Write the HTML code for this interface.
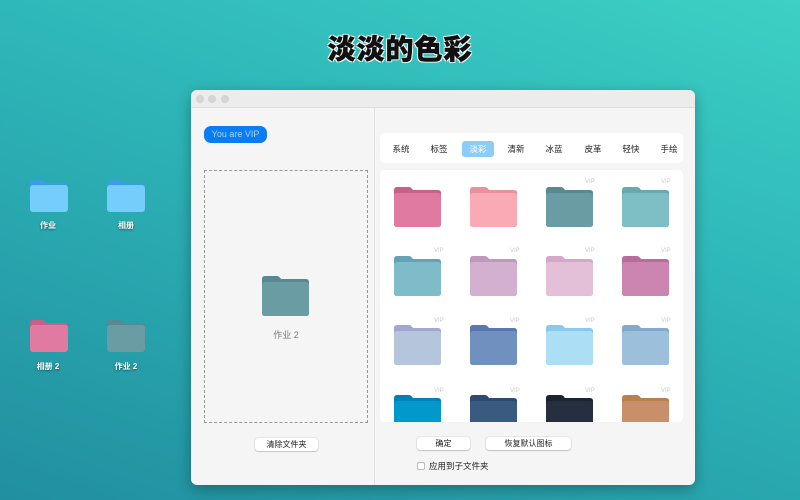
<!DOCTYPE html>
<html><head><meta charset="utf-8"><style>
*{margin:0;padding:0;box-sizing:border-box}
body{width:800px;height:500px;overflow:hidden;position:relative;font-family:"Liberation Sans","Noto Sans CJK SC",sans-serif;background:linear-gradient(200deg,#3dd0c4 0%,#2eb6b8 40%,#218fa0 100%)}
.title{position:absolute;left:0;width:800px;top:28px;text-align:center;font-size:28px;font-weight:900;color:#111;letter-spacing:1px;-webkit-text-stroke:0.5px #111;text-shadow:0 0 2px #fff,1px 1px 0 #fff,-1px -1px 0 #fff,1px -1px 0 #fff,-1px 1px 0 #fff}
.f{position:absolute}
.dl{position:absolute;width:60px;text-align:center;font-size:8px;color:#fff;font-weight:bold;text-shadow:0 1px 2px rgba(0,0,0,.5)}
.win{position:absolute;left:191px;top:90px;width:504px;height:395px;background:#f5f5f5;border-radius:6px;overflow:hidden;box-shadow:0 4px 14px rgba(0,0,0,.3)}
.tb{position:absolute;left:0;top:0;width:504px;height:18px;background:#ececec;border-bottom:1px solid #ddd}
.dot{position:absolute;top:5px;width:8px;height:8px;border-radius:50%;background:#d4d4d4}
.split{position:absolute;left:183px;top:18px;width:1px;height:377px;background:#e2e2e2}
.vip{position:absolute;left:13px;top:36px;width:63px;height:17px;border-radius:7px;background:#0a7cf5;color:#aad4ff;font-size:9px;text-align:center;line-height:17px}
.drop{position:absolute;left:13px;top:80px;width:164px;height:253px;border:1px dashed #999}
.btn{position:absolute;height:13px;background:#fff;border-radius:3px;box-shadow:0 0 1px rgba(0,0,0,.4),0 1px 1px rgba(0,0,0,.15);font-size:8px;text-align:center;line-height:13px;color:#222}
.tabs{position:absolute;left:189px;top:43px;width:303px;height:30px;background:#fff;border-radius:5px}
.tab{position:absolute;top:8px;font-size:8.5px;color:#222;width:32px;text-align:center;height:16px;line-height:16px}
.grid{position:absolute;left:189px;top:80px;width:303px;height:252px;background:#fff;border-radius:5px;overflow:hidden}
.v{position:absolute;font-size:6px;color:#ccc}
</style></head><body>
<div class="title">淡淡的色彩</div>

<svg class="f" style="left:30px;top:180px" width="38" height="32"><path d="M0 3Q0 0 3 0H12Q14 0 16 3H35Q38 3 38 6V29Q38 32 35 32H3Q0 32 0 29Z" fill="#3a9ee0"/><rect y="5" width="38" height="27" rx="3" fill="#74cdfb"/></svg>
<svg class="f" style="left:107px;top:180px" width="38" height="32"><path d="M0 3Q0 0 3 0H12Q14 0 16 3H35Q38 3 38 6V29Q38 32 35 32H3Q0 32 0 29Z" fill="#3a9ee0"/><rect y="5" width="38" height="27" rx="3" fill="#74cdfb"/></svg>
<div class="dl" style="left:18px;top:220px">作业</div>
<div class="dl" style="left:96px;top:220px">相册</div>
<svg class="f" style="left:30px;top:320px" width="38" height="32"><path d="M0 3Q0 0 3 0H12Q14 0 16 3H35Q38 3 38 6V29Q38 32 35 32H3Q0 32 0 29Z" fill="#c9608a"/><rect y="5" width="38" height="27" rx="3" fill="#e07aa0"/></svg>
<svg class="f" style="left:107px;top:320px" width="38" height="32"><path d="M0 3Q0 0 3 0H12Q14 0 16 3H35Q38 3 38 6V29Q38 32 35 32H3Q0 32 0 29Z" fill="#5a8890"/><rect y="5" width="38" height="27" rx="3" fill="#6a9ca3"/></svg>
<div class="dl" style="left:18px;top:361px">相册 2</div>
<div class="dl" style="left:96px;top:361px">作业 2</div>

<div class="win">
<div class="tb"><div class="dot" style="left:5px"></div><div class="dot" style="left:17px"></div><div class="dot" style="left:30px"></div></div>
<div class="split"></div>
<div class="vip">You are VIP</div>
<div class="drop"></div>
<svg class="f" style="left:71px;top:186px" width="47" height="40"><path d="M0 3Q0 0 3 0H15Q17 0 19 3H44Q47 3 47 6V37Q47 40 44 40H3Q0 40 0 37Z" fill="#5a8890"/><rect y="6" width="47" height="34" rx="3" fill="#6a9ca3"/></svg>
<div style="position:absolute;left:60px;top:238px;width:70px;text-align:center;font-size:9px;color:#777">作业 2</div>
<div class="btn" style="left:64px;top:348px;width:63px">清除文件夹</div>

<div class="tabs">
<div class="tab" style="left:5px">系统</div>
<div class="tab" style="left:43px">标签</div>
<div class="tab" style="left:82px;background:#8ccdf8;color:#fff;border-radius:3px">淡彩</div>
<div class="tab" style="left:120px">清新</div>
<div class="tab" style="left:158px">冰蓝</div>
<div class="tab" style="left:197px">皮革</div>
<div class="tab" style="left:235px">轻快</div>
<div class="tab" style="left:273px">手绘</div>
</div>
<div class="grid" id="g"></div>
<div class="btn" style="left:226px;top:347px;width:53px">确定</div>
<div class="btn" style="left:295px;top:347px;width:85px">恢复默认图标</div>
<div style="position:absolute;left:226px;top:372px;width:8px;height:8px;border:1px solid #bbb;background:#fff;border-radius:2px"></div>
<div style="position:absolute;left:238px;top:370px;font-size:8.5px;color:#222">应用到子文件夹</div>
</div>
<div id="grid2"></div>
<script></script>
<div style="position:absolute;left:380px;top:170px;width:303px;height:252px;overflow:hidden">
<!-- row1 -->
<svg class="f" style="left:14px;top:17px" width="47" height="40"><path d="M0 3Q0 0 3 0H15Q17 0 19 3H44Q47 3 47 6V37Q47 40 44 40H3Q0 40 0 37Z" fill="#c9608a"/><rect y="6" width="47" height="34" rx="3" fill="#e07aa0"/></svg>
<svg class="f" style="left:90px;top:17px" width="47" height="40"><path d="M0 3Q0 0 3 0H15Q17 0 19 3H44Q47 3 47 6V37Q47 40 44 40H3Q0 40 0 37Z" fill="#e8909c"/><rect y="6" width="47" height="34" rx="3" fill="#f9aab4"/></svg>
<svg class="f" style="left:166px;top:17px" width="47" height="40"><path d="M0 3Q0 0 3 0H15Q17 0 19 3H44Q47 3 47 6V37Q47 40 44 40H3Q0 40 0 37Z" fill="#588890"/><rect y="6" width="47" height="34" rx="3" fill="#6a9ca3"/></svg>
<svg class="f" style="left:242px;top:17px" width="47" height="40"><path d="M0 3Q0 0 3 0H15Q17 0 19 3H44Q47 3 47 6V37Q47 40 44 40H3Q0 40 0 37Z" fill="#68a8b0"/><rect y="6" width="47" height="34" rx="3" fill="#7dbfc5"/></svg>
<div class="v" style="left:205px;top:9px">VIP</div><div class="v" style="left:281px;top:9px">VIP</div>
<!-- row2 -->
<svg class="f" style="left:14px;top:86px" width="47" height="40"><path d="M0 3Q0 0 3 0H15Q17 0 19 3H44Q47 3 47 6V37Q47 40 44 40H3Q0 40 0 37Z" fill="#66a2b4"/><rect y="6" width="47" height="34" rx="3" fill="#7dbcc8"/></svg>
<svg class="f" style="left:90px;top:86px" width="47" height="40"><path d="M0 3Q0 0 3 0H15Q17 0 19 3H44Q47 3 47 6V37Q47 40 44 40H3Q0 40 0 37Z" fill="#c098bc"/><rect y="6" width="47" height="34" rx="3" fill="#d4b0d0"/></svg>
<svg class="f" style="left:166px;top:86px" width="47" height="40"><path d="M0 3Q0 0 3 0H15Q17 0 19 3H44Q47 3 47 6V37Q47 40 44 40H3Q0 40 0 37Z" fill="#d4a8c8"/><rect y="6" width="47" height="34" rx="3" fill="#e4c0d8"/></svg>
<svg class="f" style="left:242px;top:86px" width="47" height="40"><path d="M0 3Q0 0 3 0H15Q17 0 19 3H44Q47 3 47 6V37Q47 40 44 40H3Q0 40 0 37Z" fill="#b86c9c"/><rect y="6" width="47" height="34" rx="3" fill="#cc85b0"/></svg>
<div class="v" style="left:54px;top:78px">VIP</div><div class="v" style="left:130px;top:78px">VIP</div><div class="v" style="left:205px;top:78px">VIP</div><div class="v" style="left:281px;top:78px">VIP</div>
<!-- row3 -->
<svg class="f" style="left:14px;top:155px" width="47" height="40"><path d="M0 3Q0 0 3 0H15Q17 0 19 3H44Q47 3 47 6V37Q47 40 44 40H3Q0 40 0 37Z" fill="#a0a8d0"/><rect y="6" width="47" height="34" rx="3" fill="#b5c5dc"/></svg>
<svg class="f" style="left:90px;top:155px" width="47" height="40"><path d="M0 3Q0 0 3 0H15Q17 0 19 3H44Q47 3 47 6V37Q47 40 44 40H3Q0 40 0 37Z" fill="#5a78b0"/><rect y="6" width="47" height="34" rx="3" fill="#7090c0"/></svg>
<svg class="f" style="left:166px;top:155px" width="47" height="40"><path d="M0 3Q0 0 3 0H15Q17 0 19 3H44Q47 3 47 6V37Q47 40 44 40H3Q0 40 0 37Z" fill="#8cc8ec"/><rect y="6" width="47" height="34" rx="3" fill="#acdff5"/></svg>
<svg class="f" style="left:242px;top:155px" width="47" height="40"><path d="M0 3Q0 0 3 0H15Q17 0 19 3H44Q47 3 47 6V37Q47 40 44 40H3Q0 40 0 37Z" fill="#84a8cc"/><rect y="6" width="47" height="34" rx="3" fill="#9cc0dc"/></svg>
<div class="v" style="left:54px;top:148px">VIP</div><div class="v" style="left:130px;top:148px">VIP</div><div class="v" style="left:205px;top:148px">VIP</div><div class="v" style="left:281px;top:148px">VIP</div>
<!-- row4 -->
<svg class="f" style="left:14px;top:225px" width="47" height="40"><path d="M0 3Q0 0 3 0H15Q17 0 19 3H44Q47 3 47 6V37Q47 40 44 40H3Q0 40 0 37Z" fill="#0080b8"/><rect y="6" width="47" height="34" rx="3" fill="#0099cc"/></svg>
<svg class="f" style="left:90px;top:225px" width="47" height="40"><path d="M0 3Q0 0 3 0H15Q17 0 19 3H44Q47 3 47 6V37Q47 40 44 40H3Q0 40 0 37Z" fill="#2e4a70"/><rect y="6" width="47" height="34" rx="3" fill="#3a5a80"/></svg>
<svg class="f" style="left:166px;top:225px" width="47" height="40"><path d="M0 3Q0 0 3 0H15Q17 0 19 3H44Q47 3 47 6V37Q47 40 44 40H3Q0 40 0 37Z" fill="#1c2432"/><rect y="6" width="47" height="34" rx="3" fill="#262f40"/></svg>
<svg class="f" style="left:242px;top:225px" width="47" height="40"><path d="M0 3Q0 0 3 0H15Q17 0 19 3H44Q47 3 47 6V37Q47 40 44 40H3Q0 40 0 37Z" fill="#b8804e"/><rect y="6" width="47" height="34" rx="3" fill="#c8906a"/></svg>
<div class="v" style="left:54px;top:218px">VIP</div><div class="v" style="left:130px;top:218px">VIP</div><div class="v" style="left:205px;top:218px">VIP</div><div class="v" style="left:281px;top:218px">VIP</div>
</div>
</body></html>
